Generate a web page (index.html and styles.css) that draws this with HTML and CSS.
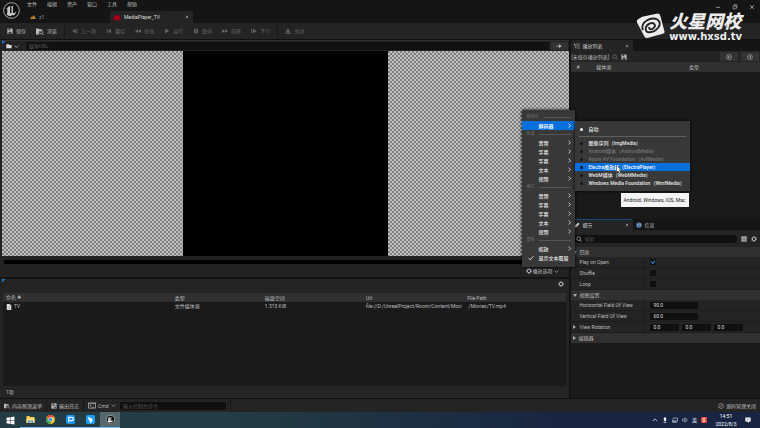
FILE: index.html
```html
<!DOCTYPE html>
<html lang="zh-CN">
<head>
    <meta charset="UTF-8">
    <meta name="viewport" content="width=device-width, initial-scale=1.0">
    <title>MediaPlayer_TV</title>
    <link rel="stylesheet" href="styles.css">
</head>
<body>

<!-- 图标 -->
<svg class="sprite" aria-hidden="true">
    <symbol id="i-unreal" viewBox="0 0 24 24"><circle cx="12" cy="12" r="11" fill="#0c0c0c" stroke="currentColor" stroke-width="1.2"/><path d="M5 10c1-2 3-4 6-5-1 1-1 1-1 2v8c0 1 1 1 2 0V8l-1-1 4-2-1 2v8l2 1 3-3c-1 4-3 6-5 6l-1-1-2 2c-3 0-5-1-6-3l1-1V9c-1 0-2 0-2 1z" fill="currentColor"/></symbol>
    <symbol id="i-save" viewBox="0 0 16 16"><path d="M1 1h12l2 2v12H1z" fill="currentColor"/><path d="M4 1h7v5H4zM4 10h8v5H4z" fill="#333"/><path d="M8 2h2v3H8z" fill="currentColor"/></symbol>
    <symbol id="i-browse" viewBox="0 0 18 16"><path d="M0 1h6l1 2h7v3h-3a5 5 0 0 0-3 9H0z" fill="currentColor"/><circle cx="12" cy="10" r="3.5" fill="none" stroke="currentColor" stroke-width="1.6"/><path d="m14 13 3 3" stroke="currentColor" stroke-width="1.8"/></symbol>
    <symbol id="i-prev" viewBox="0 0 16 16"><path d="M10 2v12L1 8zM11 2h1v12h-1zM14 2h1v12h-1z" fill="currentColor"/></symbol>
    <symbol id="i-rewind" viewBox="0 0 16 16"><path d="M2 2h2v12H2zM13 2v12L5 8z" fill="currentColor"/></symbol>
    <symbol id="i-reverse" viewBox="0 0 16 16"><path d="M8 3v10L0 8zM16 3v10L8 8z" fill="currentColor"/></symbol>
    <symbol id="i-play" viewBox="0 0 16 16"><path d="M3 2v12l11-6z" fill="currentColor"/></symbol>
    <symbol id="i-pause" viewBox="0 0 16 16"><path d="M3 2h4v12H3zM9 2h4v12H9z" fill="currentColor"/></symbol>
    <symbol id="i-forward" viewBox="0 0 16 16"><path d="M0 3v10l8-5zM8 3v10l8-5z" fill="currentColor"/></symbol>
    <symbol id="i-next" viewBox="0 0 16 16"><path d="M1 2h2v12H1zM5 2v12l10-6z" fill="currentColor"/></symbol>
    <symbol id="i-eject" viewBox="0 0 16 16"><path d="m8 1 6 9H2zM1 12h14v3H1z" fill="currentColor"/></symbol>
    <symbol id="i-folder" viewBox="0 0 16 16"><path d="M1 3h6l2 2h6v9H1z" fill="currentColor"/></symbol>
    <symbol id="i-down" viewBox="0 0 16 16"><path d="m2 5 6 6 6-6" fill="none" stroke="currentColor" stroke-width="2"/></symbol>
    <symbol id="i-right" viewBox="0 0 16 16"><path d="m5 2 6 6-6 6" fill="none" stroke="currentColor" stroke-width="2.6"/></symbol>
    <symbol id="i-arrow" viewBox="0 0 16 16"><path d="M1 7h7V3l7 5-7 5V9H1z" fill="currentColor"/></symbol>
    <symbol id="i-list" viewBox="0 0 18 16"><path d="M0 1h4v3H0zM6 1h12v2H6zM4 6h3v3H4zM9 7h9v2H9zM4 12h3v3H4zM9 13h9v2H9zM1 4h1v10h3v-1H2z" fill="currentColor"/></symbol>
    <symbol id="i-search" viewBox="0 0 16 16"><circle cx="7" cy="7" r="5" fill="none" stroke="currentColor" stroke-width="1.8"/><path d="m11 11 4 4" stroke="currentColor" stroke-width="2"/></symbol>
    <symbol id="i-back" viewBox="0 0 16 16"><circle cx="8" cy="8" r="6.5" fill="none" stroke="currentColor" stroke-width="1.5"/><path d="M12 8H5m3-3L5 8l3 3" fill="none" stroke="currentColor" stroke-width="1.5"/></symbol>
    <symbol id="i-fwd" viewBox="0 0 16 16"><circle cx="8" cy="8" r="6.5" fill="none" stroke="currentColor" stroke-width="1.5"/><path d="M4 8h7M8 5l3 3-3 3" fill="none" stroke="currentColor" stroke-width="1.5"/></symbol>
    <symbol id="i-pencil" viewBox="0 0 16 16"><path d="M0 16l2-6L11 1l4 4-9 9z" fill="currentColor"/></symbol>
    <symbol id="i-info" viewBox="0 0 16 16"><circle cx="8" cy="8" r="7" fill="#6d93c9"/><path d="M7 3h2v2H7zM7 7h2v6H7z" fill="#18305c"/></symbol>
    <symbol id="i-grid" viewBox="0 0 16 16"><path d="M1 1h14v14H1z" fill="currentColor"/><path d="M3 5h10M6 6v8M10 6v8M3 10h10" stroke="#333" stroke-width="1"/></symbol>
    <symbol id="i-gear" viewBox="0 0 16 16"><circle cx="8" cy="8" r="4.5" fill="none" stroke="currentColor" stroke-width="2.4"/><circle cx="8" cy="8" r="6.6" fill="none" stroke="currentColor" stroke-width="2.2" stroke-dasharray="2.6 2.58"/></symbol>
    <symbol id="i-check" viewBox="0 0 16 16"><path d="m2 8 4 5 8-10" fill="none" stroke="currentColor" stroke-width="2.4"/></symbol>
    <symbol id="i-close" viewBox="0 0 16 16"><path d="m3 3 10 10M13 3 3 13" stroke="currentColor" stroke-width="2"/></symbol>
    <symbol id="i-file" viewBox="0 0 14 16"><path d="M1 0h8l4 4v12H1z" fill="currentColor"/><path d="M9 0v4h4M4 7h6M4 10h6M4 13h6" fill="none" stroke="#888"/></symbol>
    <symbol id="i-log" viewBox="0 0 16 16"><path d="M1 1h14v14H1z" fill="currentColor"/><path d="M3 4h7M3 7h5M7 10l4 4 3-4M11 6v7" fill="none" stroke="#222" stroke-width="1.5"/></symbol>
    <symbol id="i-cmd" viewBox="0 0 18 16"><path d="M1 2h16v12H1z" fill="none" stroke="currentColor" stroke-width="1.6"/><path d="M1 4h16M4 7l3 2-3 2M9 12h5" fill="none" stroke="currentColor" stroke-width="1.5"/></symbol>
    <symbol id="i-off" viewBox="0 0 16 16"><circle cx="8" cy="8" r="6.5" fill="none" stroke="currentColor" stroke-width="1.6"/><path d="M4 12 12 4" stroke="currentColor" stroke-width="1.6"/></symbol>
</svg>

<!-- 标题栏 -->
<header class="titlebar">
    <svg class="brand"><use href="#i-unreal"/></svg>
    <div class="title-main">
        <nav class="menubar">
            <button>文件</button>
            <button>编辑</button>
            <button>资产</button>
            <button>窗口</button>
            <button>工具</button>
            <button>帮助</button>
        </nav>
        <div class="doc-tabs">
            <button class="doc-tab">
                <svg class="icon" viewBox="0 0 16 16"><path d="M0 13 5 6l2 2 3-6 6 11z" fill="#c08020"/></svg>
                z1
            </button>
            <button class="doc-tab active">
                <svg class="icon wide" viewBox="0 0 20 16"><path d="M2 15C-1 8 4 2 10 2s11 6 8 13z" fill="#a8001c"/></svg>
                <span>MediaPlayer_TV</span>
                <svg class="icon tiny"><use href="#i-close"/></svg>
            </button>
        </div>
    </div>
    <div class="window-buttons">
        <button aria-label="最小化"><svg class="icon" viewBox="0 0 16 16"><path d="M3 9h10" stroke="currentColor" stroke-width="2"/></svg></button>
        <button aria-label="还原"><svg class="icon" viewBox="0 0 16 16"><path d="M3 5h8v8H3zM5 5V2h8v8h-2" fill="none" stroke="currentColor" stroke-width="1.6"/></svg></button>
        <button aria-label="关闭"><svg class="icon" viewBox="0 0 16 16"><use href="#i-close"/></svg></button>
    </div>
</header>

<!-- 水印 -->
<div class="watermark">
    <svg class="watermark-logo" viewBox="0 0 58 50">
        <path d="M12 7 42 1q4 0 5 4l8 30q1 4-3 5l-30 8q-4 1-6-3L2 18q-2-4 2-6z" fill="#ececec"/>
        <path d="M13 33C8 17 29 6 42 13c10 8-2 25-18 24-8-1-7-13 3-17 9-3 13 5 6 10-4 3-9 1-7-3" fill="none" stroke="#222" stroke-width="3.6"/>
    </svg>
    <div class="watermark-text">
        <strong>火星网校</strong>
        <span>www.hxsd.tv</span>
    </div>
</div>

<!-- 工具栏 -->
<div class="toolbar">
    <button><svg class="icon"><use href="#i-save"/></svg>保存</button>
    <button><svg class="icon wide"><use href="#i-browse"/></svg>浏览</button>
    <i class="split"></i>
    <button disabled><svg class="icon"><use href="#i-prev"/></svg>上一项</button>
    <button disabled><svg class="icon"><use href="#i-rewind"/></svg>重绕</button>
    <button disabled><svg class="icon"><use href="#i-reverse"/></svg>快退</button>
    <button disabled><svg class="icon"><use href="#i-play"/></svg>运行</button>
    <button disabled><svg class="icon"><use href="#i-pause"/></svg>暂停</button>
    <button disabled><svg class="icon"><use href="#i-forward"/></svg>前移</button>
    <button disabled><svg class="icon"><use href="#i-next"/></svg>下个</button>
    <i class="split"></i>
    <button disabled><svg class="icon"><use href="#i-eject"/></svg>关闭</button>
</div>

<main class="workspace">
    <div class="left">
        <section class="player">
            <div class="url-bar marked">
                <button class="source" aria-label="来源"><svg class="icon"><use href="#i-folder"/></svg><svg class="icon small"><use href="#i-down"/></svg></button>
                <input type="text" placeholder="媒体URL" aria-label="媒体URL">
                <button class="go" aria-label="打开"><svg class="icon"><use href="#i-arrow"/></svg></button>
            </div>
            <div class="viewport"><div class="video"></div></div>
            <div class="transport">
                <div class="scrubber"></div>
                <div class="options">
                    <button class="options-button"><svg class="icon"><use href="#i-gear"/></svg>播放选项<svg class="icon small"><use href="#i-down"/></svg></button>

                    <!-- 播放选项菜单 -->
                    <div class="menu">
                        <div class="menu-title">媒体库</div>
                        <div class="menu-parent">
                            <button class="menu-item selected"><span>解码器</span><svg class="icon small"><use href="#i-right"/></svg></button>
                            <div class="submenu">
                                <button class="auto on">自动</button>
                                <hr>
                                <button>图像序列（ImgMedia）</button>
                                <button disabled>Android媒体（AndroidMedia）</button>
                                <button disabled>Apple AV Foundation（AvfMedia）</button>
                                <button class="selected">Electra播放器（ElectraPlayer）</button>
                                <button>WebM媒体（WebMMedia）</button>
                                <button>Windows Media Foundation（WmfMedia）</button>
                                <svg class="cursor" viewBox="0 0 12 18"><path d="M1 1v14l3-3 3 5 2-1-2-5h4z" fill="#fff" stroke="#222"/></svg>
                                <div class="tooltip" role="tooltip">Android, Windows, IOS, Mac</div>
                            </div>
                        </div>
                        <div class="menu-title">轨道</div>
                        <button class="menu-item"><span>音频</span><svg class="icon small"><use href="#i-right"/></svg></button>
                        <button class="menu-item"><span>字幕</span><svg class="icon small"><use href="#i-right"/></svg></button>
                        <button class="menu-item"><span>字幕</span><svg class="icon small"><use href="#i-right"/></svg></button>
                        <button class="menu-item"><span>文本</span><svg class="icon small"><use href="#i-right"/></svg></button>
                        <button class="menu-item"><span>视频</span><svg class="icon small"><use href="#i-right"/></svg></button>
                        <div class="menu-title">格式</div>
                        <button class="menu-item"><span>音频</span><svg class="icon small"><use href="#i-right"/></svg></button>
                        <button class="menu-item"><span>字幕</span><svg class="icon small"><use href="#i-right"/></svg></button>
                        <button class="menu-item"><span>字幕</span><svg class="icon small"><use href="#i-right"/></svg></button>
                        <button class="menu-item"><span>文本</span><svg class="icon small"><use href="#i-right"/></svg></button>
                        <button class="menu-item"><span>视频</span><svg class="icon small"><use href="#i-right"/></svg></button>
                        <div class="menu-title">查看</div>
                        <button class="menu-item"><span>缩放</span><svg class="icon small"><use href="#i-right"/></svg></button>
                        <button class="menu-item checked"><svg class="icon"><use href="#i-check"/></svg><span>显示文本覆层</span></button>
                    </div>
                </div>
            </div>
        </section>

        <section class="library">
            <div class="library-bar marked"><button aria-label="设置"><svg class="icon"><use href="#i-gear"/></svg></button></div>
            <div class="library-list">
                <table>
                    <colgroup><col class="c-name"><col class="c-type"><col class="c-size"><col class="c-url"><col></colgroup>
                    <thead><tr><th>命名 <small>▲</small></th><th>类型</th><th>磁盘空间</th><th>Url</th><th>File Path</th></tr></thead>
                    <tbody><tr><td><svg class="icon file"><use href="#i-file"/></svg>TV</td><td>文件媒体源</td><td>1.315 KiB</td><td>file://D:/UnrealProject/Room/Content/Movi</td><td>./Movies/TV.mp4</td></tr></tbody>
                </table>
            </div>
            <div class="library-count">1项</div>
        </section>
    </div>

    <div class="right">
        <section class="playlist">
            <div class="tabs">
                <button class="tab active"><svg class="icon"><use href="#i-list"/></svg><span>播放列表</span><svg class="icon tiny"><use href="#i-close"/></svg></button>
            </div>
            <div class="playlist-bar">
                <span>[未保存播放列表]</span>
                <button aria-label="查找"><svg class="icon dim"><use href="#i-search"/></svg></button>
                <button aria-label="保存"><svg class="icon"><use href="#i-save"/></svg></button>
                <button class="step first" aria-label="上一个"><svg class="icon"><use href="#i-back"/></svg></button>
                <button class="step" aria-label="下一个"><svg class="icon"><use href="#i-fwd"/></svg></button>
            </div>
            <table>
                <thead><tr><th class="c-index">#</th><th class="c-source">媒体源</th><th>类型</th></tr></thead>
            </table>
        </section>

        <section class="details">
            <div class="tabs">
                <button class="tab active lit"><svg class="icon"><use href="#i-pencil"/></svg><span>细节</span><svg class="icon tiny"><use href="#i-close"/></svg></button>
                <button class="tab"><svg class="icon"><use href="#i-info"/></svg><span>信息</span></button>
            </div>
            <div class="search-bar">
                <label class="search"><svg class="icon"><use href="#i-search"/></svg><input type="text" placeholder="搜索" aria-label="搜索"></label>
                <button aria-label="表格"><svg class="icon"><use href="#i-grid"/></svg></button>
                <button aria-label="设置"><svg class="icon"><use href="#i-gear"/></svg></button>
            </div>
            <button class="category open">回放</button>
            <div class="row"><label for="playOnOpen">Play on Open</label><div><input type="checkbox" id="playOnOpen" checked></div></div>
            <div class="row"><label for="shuffle">Shuffle</label><div><input type="checkbox" id="shuffle"></div></div>
            <div class="row"><label for="loop">Loop</label><div><input type="checkbox" id="loop"></div></div>
            <button class="category open">视图设置</button>
            <div class="row"><label for="hfov">Horizontal Field Of View</label><div><input class="number long" type="text" id="hfov" value="90.0"></div></div>
            <div class="row"><label for="vfov">Vertical Field Of View</label><div><input class="number long" type="text" id="vfov" value="60.0"></div></div>
            <div class="row group"><label for="rotX">View Rotation</label><div><input class="number" type="text" id="rotX" value="0.0"><input class="number" type="text" aria-label="Y" value="0.0"><input class="number" type="text" aria-label="Z" value="0.0"></div></div>
            <button class="category">编辑器</button>
        </section>
    </div>
</main>

<!-- 状态栏 -->
<footer class="statusbar">
    <button><svg class="icon"><use href="#i-browse"/></svg>内容侧滑菜单</button>
    <i class="split"></i>
    <button><svg class="icon"><use href="#i-log"/></svg>输出日志</button>
    <i class="split"></i>
    <label class="cmd"><svg class="icon wide"><use href="#i-cmd"/></svg><select aria-label="命令类型"><option>Cmd</option></select><svg class="icon small"><use href="#i-down"/></svg></label>
    <input type="text" placeholder="输入控制台命令" aria-label="控制台命令">
    <i class="split"></i>
    <button class="source-control"><svg class="icon"><use href="#i-off"/></svg>源码管理关闭</button>
</footer>

<!-- 任务栏 -->
<div class="taskbar">
    <button class="task start" aria-label="开始"><svg viewBox="0 0 16 16"><path d="M1 3l6-1v6H1zM8 2l7-1v7H8zM1 9h6v5l-6-1zM8 9h7v6l-7-1z" fill="#fff"/></svg></button>
    <button class="task running" aria-label="文件资源管理器"><svg viewBox="0 0 18 16"><path d="M1 1h6l1 2h9v12H1z" fill="#f3c74a"/><path d="M1 6h16v8H1z" fill="#ffe08a"/><path d="M4 15v-5h10v5h-3v-3H7v3z" fill="#3b95d8"/></svg></button>
    <button class="task running" aria-label="Chrome"><svg viewBox="0 0 16 16"><circle cx="8" cy="8" r="8" fill="#f5c52c"/><path d="M1 4a8 8 0 0 1 14 0H8L5 9z" fill="#df4b3b"/><path d="M1 4a8 8 0 0 0 6 12l4-6-5 1z" fill="#35a353"/><circle cx="8" cy="8" r="3.8" fill="#fff"/><circle cx="8" cy="8" r="2.9" fill="#4285f4"/></svg></button>
    <button class="task running" aria-label="播放器"><svg viewBox="0 0 16 16"><rect width="16" height="16" rx="3" fill="#1595f5"/><path d="M5 13V4h5a2 2 0 0 1 0 6H7" fill="none" stroke="#fff" stroke-width="2.2"/></svg></button>
    <button class="task running" aria-label="飞鸟"><svg viewBox="0 0 16 16"><rect width="16" height="16" rx="3" fill="#1b9cf8"/><path d="M3 3l9 4-1 2 1 1-5 5V11L5 9z" fill="#fff"/></svg></button>
    <button class="task running current" aria-label="Unreal"><svg><use href="#i-unreal"/></svg></button>
    <div class="tray">
        <svg viewBox="0 0 16 16"><path d="m2 11 6-6 6 6" fill="none" stroke="#fff" stroke-width="1.8"/></svg>
        <svg viewBox="0 0 16 16"><path d="M5 1h6v9H5zM7 11h2v3h3v1H4v-1h3z" fill="#fff"/></svg>
        <svg viewBox="0 0 16 16"><path d="M2 3h13v8H5M9 11v3M5 14h8M1 8h4v6H1z" fill="none" stroke="#fff" stroke-width="1.4"/></svg>
        <svg viewBox="0 0 16 16"><path d="M1 6h3l4-4v12l-4-4H1z" fill="none" stroke="#fff" stroke-width="1.3"/><path d="M10 5q2 3 0 6M12 3q4 5 0 10" fill="none" stroke="#bbc" stroke-width="1.3"/></svg>
        <span>英</span>
        <svg viewBox="0 0 16 16"><rect width="16" height="16" rx="3" fill="#e5432d"/><path d="M12 4Q4 2 5 6t6 4q0 4-7 2" fill="none" stroke="#fff" stroke-width="2.2"/></svg>
        <time>14:51<br>2022/8/3</time>
        <svg viewBox="0 0 16 16"><path d="M1 1h14v11h-4l-2 4-2-4H1z" fill="#fff"/><path d="M4 5h8M4 8h8" stroke="#445"/></svg>
    </div>
</div>

</body>
</html>
```
FILE: styles.css
```css
* {
    box-sizing: border-box;
}

body {
    display: flex;
    flex-direction: column;
    height: 100vh;
    margin: 0;
    overflow: hidden;
    background-color: #151515;
    color: #bcbcbc;
    font-family: Roboto, "Noto Sans CJK SC", sans-serif;
    font-size: 5px;
    line-height: 8px;
}

button,
input,
select {
    margin: 0;
    padding: 0;
    border: none;
    background: none;
    color: inherit;
    font: inherit;
}

button {
    display: flex;
    align-items: center;
    white-space: nowrap;
}

input {
    min-width: 0;
    outline: none;
}

input::placeholder {
    color: #555555;
}

table {
    width: 100%;
    border-collapse: collapse;
    table-layout: fixed;
}

th,
td {
    padding: 0 3px;
    overflow: hidden;
    font-weight: normal;
    text-align: left;
    white-space: nowrap;
}

.sprite {
    position: absolute;
    width: 0;
    height: 0;
}

/* 图标尺寸 */
.icon {
    flex: none;
    width: 6px;
    height: 6px;
}

.icon.wide {
    width: 8px;
    height: 7px;
}

.icon.small {
    width: 5px;
    height: 5px;
}

.icon.tiny {
    width: 4px;
    height: 4px;
}

.icon.dim {
    color: #777777;
}

/* 标题栏 */
.titlebar {
    display: flex;
    flex: none;
    height: 23px;
}

.brand {
    width: 17px;
    height: 17px;
    margin: 2px 7px 0 3px;
    color: #c8c8c8;
}

.title-main {
    display: flex;
    flex: 1;
    flex-direction: column;
    justify-content: space-between;
}

.menubar {
    display: flex;
    gap: 10px;
}

.doc-tabs {
    display: flex;
    align-items: flex-end;
}

.doc-tab {
    gap: 3px;
    width: 83px;
    height: 12px;
    padding: 0 4px 0 3px;
    color: #999999;
}

.doc-tab.active {
    border-radius: 2px 2px 0 0;
    background-color: #242424;
    color: #dddddd;
}

.doc-tab span,
.tab span {
    flex: 1;
    text-align: left;
}

.window-buttons {
    display: flex;
    align-items: flex-start;
    gap: 11px;
    padding: 4px 5px 0 0;
}

/* 水印 */
.watermark {
    position: absolute;
    top: 13px;
    right: 18px;
    z-index: 10;
    display: flex;
    gap: 3px;
    color: #ececec;
}

.watermark-logo {
    width: 30px;
    height: 26px;
}

.watermark-text {
    display: flex;
    flex-direction: column;
    gap: 2px;
}

.watermark strong {
    font-size: 18px;
    font-style: italic;
    font-weight: 900;
    line-height: 18px;
}

.watermark span {
    font-family: "DejaVu Sans", sans-serif;
    font-size: 10px;
    font-weight: bold;
    line-height: 8px;
}

/* 工具栏 */
.toolbar {
    display: flex;
    flex: none;
    align-items: center;
    gap: 10px;
    height: 17px;
    padding: 0 7px;
    border-bottom: 1px solid #101010;
    background-color: #242424;
}

.toolbar button {
    gap: 3px;
}

.toolbar button:disabled {
    color: #666666;
}

.split {
    flex: none;
    width: 1px;
    height: 12px;
    background-color: #181818;
}

.toolbar .split {
    margin: 0 -3px;
}

/* 主区域 */
.workspace {
    display: grid;
    flex: 1;
    grid-template-columns: 3fr 1fr;
    gap: 2px;
    min-height: 0;
}

.left,
.right {
    display: flex;
    flex-direction: column;
    min-width: 0;
}

.player {
    display: flex;
    flex: 2;
    flex-direction: column;
    background-color: #222222;
}

.url-bar {
    display: flex;
    align-items: center;
    height: 11px;
    padding: 0 1px 0 6px;
    border-top: 1px solid #303030;
}

/* 面板左上角的蓝色角标 */
.marked {
    background: linear-gradient(135deg, #1677d2 50%, transparent 50%) 2px 0 / 4px 4px no-repeat;
}

.url-bar .source {
    gap: 2px;
    width: 20px;
    color: #dddddd;
}

.url-bar input {
    flex: 1;
    height: 8px;
    padding: 0 3px;
    background-color: #111111;
}

.url-bar .go {
    justify-content: center;
    width: 17px;
    height: 8px;
    margin-left: 2px;
    background-color: #333333;
}

.viewport {
    display: flex;
    flex: 1;
    justify-content: center;
    margin: 0 0 0 2px;
    background: repeating-conic-gradient(#808080 0% 25%, #c0c0c0 0% 50%) 0 0 / 4px 4px;
}

.video {
    aspect-ratio: 1;
    background-color: #000000;
}

.transport {
    padding: 4px 4px 2px;
}

.scrubber {
    height: 4px;
    background-color: #000000;
}

.options {
    position: relative;
    width: 43px;
    margin: 3px 0 0 auto;
}

.options-button {
    gap: 1px;
    margin-left: 4px;
}

/* 下拉菜单 */
.menu {
    position: absolute;
    bottom: 100%;
    left: 0;
    z-index: 20;
    width: 53px;
    padding: 3px 0 5px;
    background-color: #383838;
    color: #e4e4e4;
    font-weight: 500;
    box-shadow: 0 0 3px #000000;
}

.menu-title {
    display: flex;
    align-items: center;
    gap: 4px;
    height: 8px;
    padding: 0 4px 0 5px;
    color: #666666;
    font-size: 4px;
}

.menu-title::after {
    flex: 1;
    height: 1px;
    background-color: #555555;
    content: "";
}

.menu-parent {
    position: relative;
}

.menu-item {
    justify-content: space-between;
    width: 100%;
    height: 9px;
    padding: 0 3px 0 17px;
}

.menu-item.checked {
    justify-content: flex-start;
    gap: 5px;
    padding: 0 0 0 6px;
}

.menu .selected {
    background-color: #0870dc;
    color: #ffffff;
}

.submenu {
    position: absolute;
    top: 0;
    left: 100%;
    width: 115px;
    padding: 4px 0;
    background-color: #383838;
    box-shadow: 0 0 3px #000000;
}

.submenu button {
    gap: 6px;
    width: 100%;
    height: 8px;
    padding-left: 5px;
}

.submenu button::before {
    width: 3px;
    height: 3px;
    border-radius: 50%;
    background-color: #151515;
    content: "";
}

.submenu .on::before {
    background-color: #ffffff;
}

.submenu button:disabled {
    color: #737373;
}

.submenu hr {
    height: 1px;
    margin: 3px 4px 2px;
    border: none;
    background-color: #606060;
}

.cursor {
    position: absolute;
    top: 44px;
    left: 41px;
    width: 6px;
    height: 9px;
}

.tooltip {
    position: absolute;
    top: 72px;
    right: 1px;
    padding: 3px;
    background-color: #f4f4f4;
    color: #222222;
    font-weight: normal;
    white-space: nowrap;
}

/* 资源列表 */
.library {
    display: flex;
    flex: 1;
    flex-direction: column;
    margin-top: 2px;
    background-color: #242424;
}

.library-bar {
    display: flex;
    justify-content: flex-end;
    padding: 2px 5px 6px;
}

.library-list {
    flex: 1;
    margin: 0 3px;
    background-color: #1a1a1a;
}

.library thead,
.playlist thead {
    background-color: #303030;
}

.library small {
    font-size: 4px;
}

.c-name {
    width: 30%;
}

.c-type {
    width: 16%;
}

.c-size,
.c-url {
    width: 18%;
}

.icon.file {
    margin-right: 2px;
    color: #e0e0e0;
    vertical-align: middle;
}

.library-count {
    padding: 2px 6px;
}

/* 标签页 */
.tabs {
    display: flex;
    height: 11px;
    background-color: #151515;
}

.tab {
    gap: 3px;
    width: 62px;
    padding: 0 4px 0 3px;
}

.tab.active {
    border-radius: 2px 2px 0 0;
    background-color: #242424;
    color: #cccccc;
}

.tab.lit {
    border-top: 1px solid #174878;
}

/* 播放列表 */
.playlist {
    flex: 1;
    background-color: #1a1a1a;
}

.playlist-bar {
    display: flex;
    align-items: center;
    gap: 3px;
    height: 11px;
    padding: 0 1px;
    background-color: #242424;
}

.playlist-bar .step {
    justify-content: center;
    width: 18px;
    height: 9px;
    background-color: #333333;
}

.playlist-bar .first {
    margin-left: auto;
}

.playlist th {
    height: 10px;
}

.playlist .c-index {
    width: 12%;
    padding-left: 6px;
}

.playlist .c-source {
    width: 49%;
}

/* 细节面板 */
.details {
    height: 50%;
    background-color: #1a1a1a;
}

.search-bar {
    display: flex;
    align-items: center;
    gap: 4px;
    height: 17px;
    padding: 0 3px;
    background-color: #242424;
}

.search {
    display: flex;
    flex: 1;
    align-items: center;
    gap: 3px;
    height: 8px;
    padding: 0 2px;
    border-radius: 4px;
    background-color: #101010;
}

.category {
    gap: 3px;
    width: 100%;
    height: 10px;
    padding-left: 2px;
    background-color: #303030;
}

.category::before,
.group label::before {
    width: 0;
    height: 0;
    border: 2px solid transparent;
    border-right-width: 0;
    border-left: 3px solid #aaaaaa;
    content: "";
}

.category.open::before {
    border: 2px solid transparent;
    border-top: 3px solid #aaaaaa;
    border-bottom-width: 0;
}

.row {
    display: grid;
    grid-template-columns: 39% 1fr;
    height: 11px;
    border-bottom: 1px solid #1c1c1c;
    background-color: #242424;
}

.row label {
    display: flex;
    align-items: center;
    padding-left: 9px;
    white-space: nowrap;
}

.row.group label {
    gap: 4px;
    padding-left: 2px;
}

.row div {
    display: flex;
    align-items: center;
    gap: 3px;
    padding-left: 5px;
    border-left: 1px solid #1c1c1c;
}

.row input {
    background-color: #101010;
}

.row input[type="checkbox"] {
    width: 6px;
    height: 6px;
    appearance: none;
}

.row input:checked::before {
    display: block;
    width: 3px;
    height: 2px;
    margin: 1px;
    border-bottom: 1px solid #2a8cf0;
    border-left: 1px solid #2a8cf0;
    content: "";
    transform: rotate(-45deg);
}

.number {
    width: 29px;
    height: 7px;
    padding: 0 3px;
    border-radius: 1px;
    color: #dddddd;
}

.number.long {
    width: 48px;
}

/* 状态栏 */
.statusbar {
    display: flex;
    flex: none;
    align-items: center;
    gap: 4px;
    height: 14px;
    padding: 0 4px;
    border-top: 1px solid #111111;
    background-color: #242424;
}

.statusbar button,
.cmd {
    gap: 2px;
}

.cmd {
    display: flex;
    align-items: center;
}

.cmd select {
    appearance: none;
}

.statusbar input {
    width: 106px;
    height: 8px;
    padding: 0 3px;
    border-radius: 2px;
    background-color: #101010;
}

.statusbar .source-control {
    margin-left: auto;
}

/* 任务栏 */
.taskbar {
    display: flex;
    flex: none;
    height: 16px;
    background: linear-gradient(to right, #243c43 30%, #182542 75%);
}

.task {
    justify-content: center;
    width: 20px;
    color: #ffffff;
}

.task svg {
    width: 9px;
    height: 9px;
}

.task.running {
    border-bottom: 1px solid #76b9ed;
}

.task.current {
    background-color: #56676d;
}

.tray {
    display: flex;
    align-items: center;
    gap: 4px;
    margin-left: auto;
    padding-right: 9px;
    color: #ffffff;
}

.tray svg {
    width: 6px;
    height: 6px;
}

.tray time {
    width: 30px;
    text-align: center;
}
```
